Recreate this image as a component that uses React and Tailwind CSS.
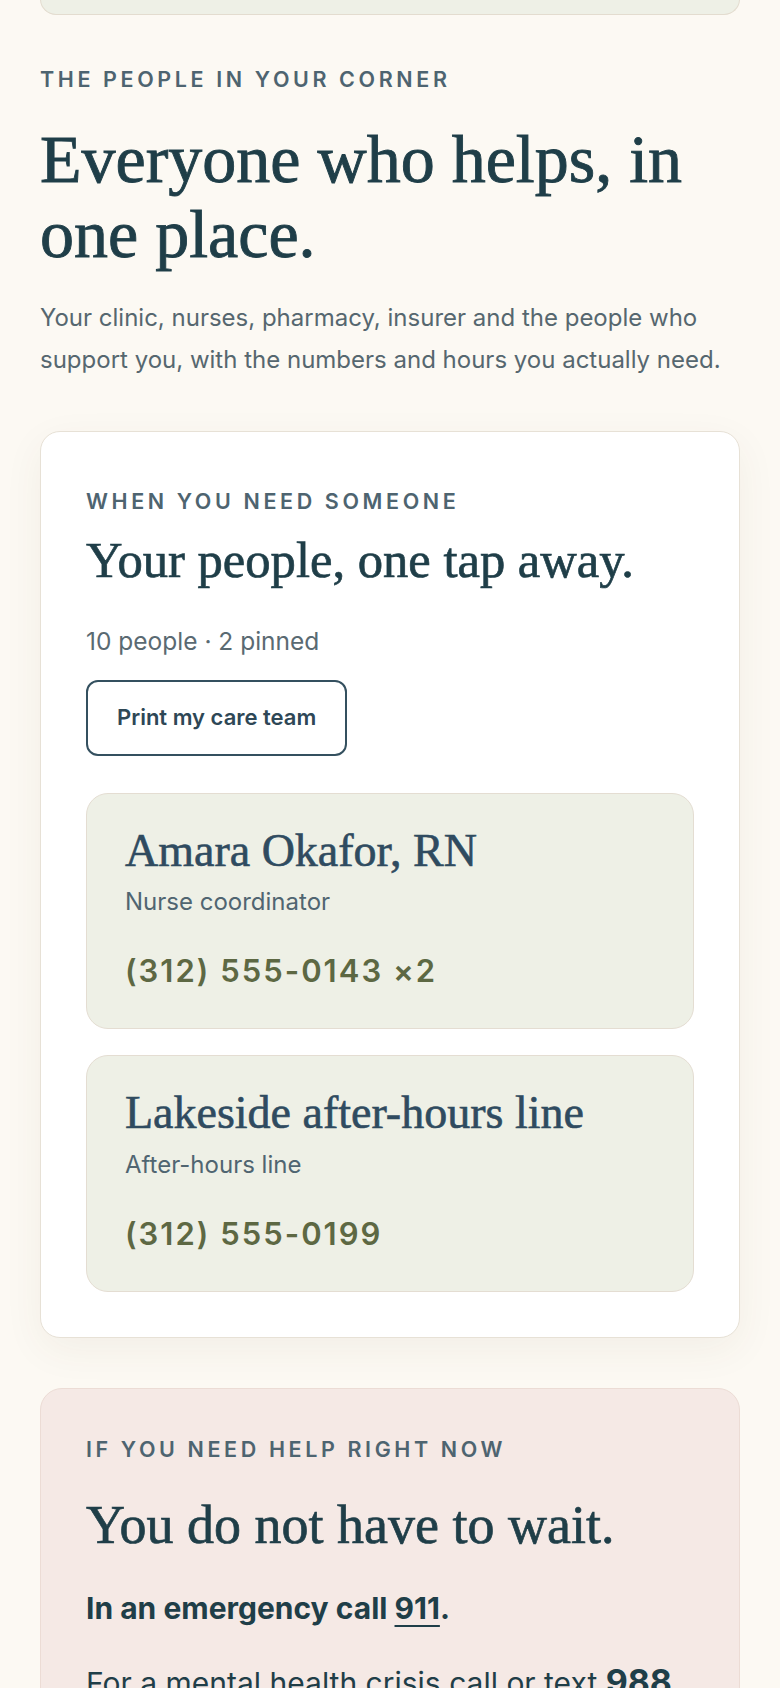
import React from "react";

const sans = "font-['Inter','Noto_Sans',sans-serif]";
const serif = "font-['Liberation_Serif','Times_New_Roman',serif]";
const eyebrow = "text-[21.5px] leading-[28px] font-semibold uppercase tracking-[0.168em] text-[#4e6470]";

function Contact({ name, role, phone }) {
  return (
    <div className="rounded-[22px] border border-[#e4ddd2] bg-[#eef0e6] px-[38px] pt-[31px] pb-[37px]">
      <div className={`${serif} text-[46px] leading-[52.8px] text-[#2f4b60] [-webkit-text-stroke:0.6px_#2f4b60]`}>{name}</div>
      <div className={`${sans} mt-[9px] text-[24px] leading-[32px] text-[#506571]`}>{role}</div>
      <div className={`${sans} mt-[33px] text-[31px] leading-[40px] font-semibold tracking-[0.065em] text-[#5d6843]`}>{phone}</div>
    </div>
  );
}

export default function App() {
  return (
    <div className={`min-h-screen bg-[#fcf9f3] px-[40px] ${sans}`}>
      <div className="-mt-[40px] h-[55px] rounded-b-[16px] border border-t-0 border-[#e3dccf] bg-[#eef0e6]" />

      <section className="pt-[50px]">
        <div className={eyebrow}>The people in your corner</div>
        <h1 className={`${serif} mt-[29px] text-[68px] leading-[75px] text-[#1f3e48] [-webkit-text-stroke:0.9px_#1f3e48]`}>
          Everyone who helps, in one place.
        </h1>
        <p className="mt-[25px] text-[24px] leading-[42px] text-[#56676f]">
          Your clinic, nurses, pharmacy, insurer and the people who support you, with the numbers and hours you actually need.
        </p>
      </section>

      <div className="mt-[50px] rounded-[20px] border border-[#e7e1d6] bg-white px-[45px] pt-[55px] pb-[45px] shadow-[0_12px_40px_rgba(80,60,30,0.06)]">
        <div className={eyebrow}>When you need someone</div>
        <h2 className={`${serif} mt-[17px] text-[50.6px] leading-[57.5px] text-[#1f3e48] [-webkit-text-stroke:0.7px_#1f3e48]`}>
          Your people, one tap away.
        </h2>
        <div className="mt-[35px] text-[24.5px] leading-[32px] text-[#5a6a72]">10 people · 2 pinned</div>
        <button className="mt-[23px] h-[76px] rounded-[12px] border-2 border-[#34505f] bg-white px-[29px] text-[22px] font-semibold text-[#2e4756]">
          Print my care team
        </button>
        <div className="mt-[37px] flex flex-col gap-[26px]">
          <Contact name="Amara Okafor, RN" role="Nurse coordinator" phone="(312) 555-0143 ×2" />
          <Contact name="Lakeside after-hours line" role="After-hours line" phone="(312) 555-0199" />
        </div>
      </div>

      <div className="mt-[50px] rounded-[22px] border border-[#ecdcd5] bg-[#f5e9e5] px-[45px] pt-[46px] pb-[45px]">
        <div className={eyebrow}>If you need help right now</div>
        <h2 className={`${serif} mt-[31px] text-[54px] leading-[62px] text-[#1f3e48] [-webkit-text-stroke:0.7px_#1f3e48]`}>
          You do not have to wait.
        </h2>
        <p className="mt-[32px] text-[30px] leading-[40px] font-bold text-[#1f3e48]">
          In an emergency call <span className="underline decoration-2 underline-offset-[6px]">911</span>.
        </p>
        <p className="mt-[34px] text-[30px] leading-[40px] text-[#1f3e48]">
          For a mental health crisis call or text <span className="text-[34px] font-bold">988</span>.
        </p>
        <p className="mt-[24px] text-[24px] leading-[38px] text-[#56676f]">
          Free, confidential, and available any time of day or night.
        </p>
      </div>
      <div className="h-[60px]" />
    </div>
  );
}
